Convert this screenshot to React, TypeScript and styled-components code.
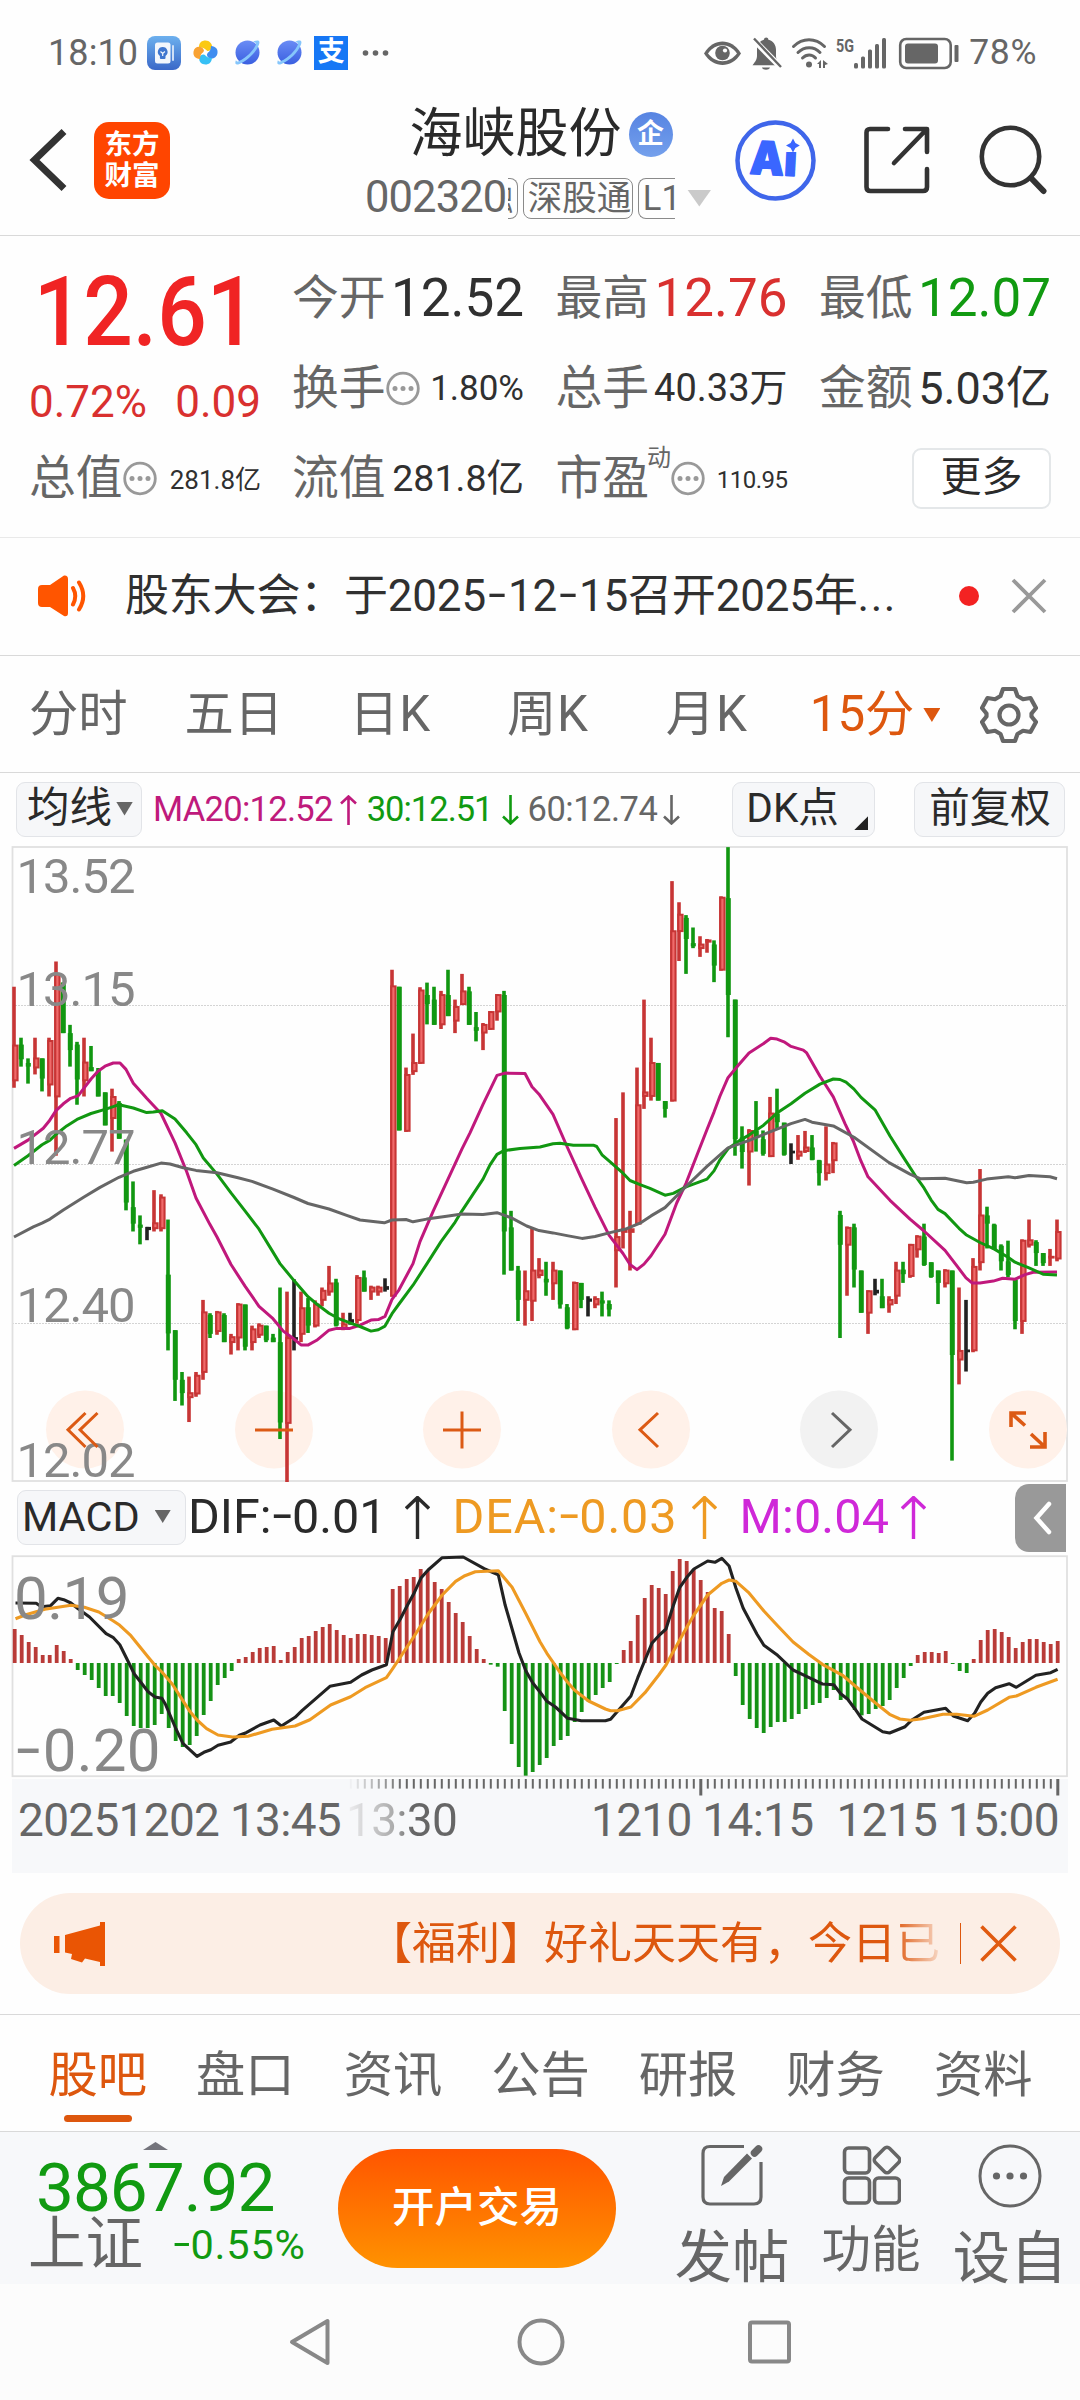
import React from "react";
import styled, { createGlobalStyle, css } from "styled-components";

const C = {
  ink: "#2a2a2a",
  grey: "#666666",
  soft: "#999999",
  line: "#d9d9d9",
  panel: "#f7f8fa",
  orange: "#dd570e",
  red: "#d9302f",
  green: "#119a11",
  ma20: "#bf1a7c",
  dea: "#ee9a22",
  macd: "#cf28d8",
};

const FONT = 'Roboto, "Noto Sans CJK SC", sans-serif';

const GlobalStyle = createGlobalStyle`
  * { box-sizing: border-box; }
  body { margin: 0; background: #fff; }
  svg { display: block; flex: none; }
`;

const Screen = styled.main`
  width: 1080px;
  height: 2400px;
  overflow: hidden;
  background: #fefefe;
  font-family: ${FONT};
  line-height: 1;
  color: ${C.ink};
  white-space: nowrap;
`;

type TextProps = { $size: number; $color?: string; $ls?: number; $ml?: number };
const Text = styled.span<TextProps>`
  flex: none;
  font-size: ${(p) => p.$size}px;
  color: ${(p) => p.$color ?? "inherit"};
  letter-spacing: ${(p) => p.$ls ?? 0}px;
  margin-left: ${(p) => p.$ml ?? 0}px;
`;

// Wide minus sign, lifted to the middle of the digits
const Dash = styled.span.attrs({ children: "-" })<{ $em?: number }>`
  display: inline-block;
  width: ${(p) => p.$em ?? 0.42}em;
  letter-spacing: 0;
  text-align: center;
  transform: translateY(-0.04em) scaleX(1.45);
`;

/* ---------- status bar ---------- */
const StatusBar = styled.header`
  height: 105px;
  padding: 0 43px 0 48px;
  display: flex;
  justify-content: space-between;
  align-items: center;
  color: ${C.grey};
`;
const StatusGroup = styled.div`
  display: flex;
  align-items: center;
`;
const Gap = styled.i<{ $w: number }>`
  flex: none;
  width: ${(p) => p.$w}px;
`;
const AliBadge = styled.span`
  width: 34px;
  height: 34px;
  display: grid;
  place-items: center;
  background: #1677f5;
  color: #fff;
  font-size: 27px;
  font-weight: 700;
`;

const BulbApp = () => (
  <svg width="34" height="34" viewBox="0 0 34 34">
    <defs>
      <linearGradient id="bulb" x1="0" y1="0" x2="0" y2="1">
        <stop offset="0" stopColor="#6cb0ee" />
        <stop offset="1" stopColor="#3a68c8" />
      </linearGradient>
    </defs>
    <rect width="34" height="34" rx="8" fill="url(#bulb)" />
    <rect x="8" y="6.500" width="15.500" height="21" rx="2.500" fill="#f2f6fc" />
    <rect x="25" y="9" width="2" height="16" rx="1" fill="#cfe0f6" />
    <path d="M15.700 11a4.900 4.900 0 0 1 2.800 8.900V22a1 1 0 0 1-1 1h-3.600a1 1 0 0 1-1-1v-2.100A4.900 4.900 0 0 1 15.700 11z" fill="#3f76cf" />
    <path d="M13.500 15.500l2.200 2 2.200-2M15.700 17.500V20" stroke="#f2f6fc" strokeWidth="1.200" fill="none" />
  </svg>
);

const Pinwheel = () => (
  <svg width="25" height="25" viewBox="0 0 25 25">
    <path d="M6 7C6 2.500 9 .500 12.500.500c4 0 7 3.500 6.500 6.500-.5 3-3 4.500-5 4C12 8 9 7.500 6 7z" fill="#fbc912" />
    <path d="M18 6c5 .500 7 3 6.500 7-.5 4-4 6-7 5.500-3-.8-4-3-3.500-5.500C17 12 18 9 18 6z" fill="#3f8df0" />
    <path d="M19 18c-.5 4.500-3 6.500-6.500 6.500-4 0-6.500-3-6.300-6C6.500 15.500 9 14 11.500 14.500 13 17 16 18 19 18z" fill="#36c0f5" />
    <path d="M7 19c-5-.5-7-3.500-6.500-7.300C1 8 4 6.300 7 6.800c3 .700 4.300 3 4 5.200C8 13 7 16 7 19z" fill="#f8a233" />
    <circle cx="12.500" cy="12.500" r="2.200" fill="#fff" />
  </svg>
);

const Planet = () => (
  <svg width="25" height="25" viewBox="0 0 25 25">
    <defs>
      <linearGradient id="planet" x1="0" y1="0" x2="0" y2="1">
        <stop offset="0" stopColor="#6a8cf5" />
        <stop offset="1" stopColor="#3a5fe0" />
      </linearGradient>
    </defs>
    <circle cx="12.500" cy="12.500" r="12" fill="url(#planet)" />
    <path d="M18 1.500c5-2 7.500-1.500 6 3C21.500 12 12 21 4.500 24 .500 25.500-.5 24 1 20c.5 1.500 1.500 2 3 1C11 18 18.500 10.500 21 4.500c0-2-1-2.500-3-3z" fill="#86c6fb" />
  </svg>
);

const StatusIcons = () => (
  <svg width="256" height="36" viewBox="704 34 256 36" fill={C.grey}>
    <path d="M705 52.500C710 44 717 40.500 723.500 40.500S737 44 742 52.500C737 60.500 730 64 723.500 64S710 60.500 705 52.500z" />
    <path d="M709 52.500c4-5.500 9-8.200 14.500-8.200S734 47 738 52.500c-4 5-9 7.700-14.500 7.700S713 57.500 709 52.500z" fill="#fff" />
    <circle cx="723.500" cy="52" r="7.300" />
    <circle cx="726" cy="49.500" r="2.100" fill="#fff" />
    <path d="M758 48c0-5 3.500-8.500 7-9.300 0-2.800 4.400-2.800 4.400 0 4.600 1 7.600 5 7.600 10v6c0 3.500 1 4.500 4 9.500h-27.500c3.500-4.500 4.500-6 4.500-10z" />
    <path d="M763 66.500h8c-1 3-7 3-8 0z" />
    <path d="M753 37l29 29.500" stroke="#fff" strokeWidth="6" />
    <path d="M755 37.500l27 28.500" stroke={C.grey} strokeWidth="2.400" />
    <g fill="none" stroke={C.grey} strokeWidth="3" strokeLinecap="round">
      <path d="M794.500 45.500c9-9 22-9 31 0" />
      <path d="M799 51.500c6.500-6.500 16-6.500 22 0" />
      <path d="M803.500 57c4-4 9.500-4 13 0" />
    </g>
    <circle cx="810" cy="63.500" r="3" />
    <path d="M818 63l4-4v8h-2v-4zM824 59v8h2v-3l3-1z" />
    <text x="837" y="51" fontSize="18" fontWeight="700" textLength="18" lengthAdjust="spacingAndGlyphs">5G</text>
    <rect x="855" y="62" width="4" height="5.500" rx="1.500" />
    <rect x="862" y="55.500" width="4" height="12" rx="1.500" />
    <rect x="869" y="48.500" width="4" height="19" rx="1.500" />
    <rect x="876" y="43" width="4" height="24.500" rx="1.500" />
    <rect x="883" y="37" width="4" height="30.500" rx="1.500" />
    <rect x="901.200" y="38" width="50.500" height="29" rx="6" fill="none" stroke={C.grey} strokeWidth="2.600" />
    <rect x="906" y="42.500" width="33" height="20" rx="3" />
    <rect x="955.500" y="44" width="4" height="17" rx="1" />
  </svg>
);

/* ---------- title bar ---------- */
const TitleBar = styled.nav`
  height: 131px;
  display: flex;
  align-items: flex-start;
  border-bottom: 1px solid ${C.line};
`;
const Slot = styled.div<{ $ml?: number }>`
  flex: none;
  height: 110px;
  margin-left: ${(p) => p.$ml ?? 0}px;
  display: flex;
  align-items: center;
`;
const Logo = styled.div`
  width: 76px;
  height: 77px;
  border-radius: 15px;
  background: #ff4500;
  color: #fff;
  display: flex;
  flex-direction: column;
  align-items: center;
  justify-content: center;
  gap: 4px;
  font-size: 27.500px;
  font-weight: 700;
`;
const StockTitle = styled.div`
  width: 352px;
  margin-left: 195px;
`;
const NameRow = styled.div`
  height: 58px;
  display: flex;
  align-items: center;
  justify-content: center;
`;
const CompanyBadge = styled.span`
  width: 44px;
  height: 45px;
  margin-left: 7px;
  border-radius: 50%;
  background: linear-gradient(#5784e2, #74a0ec);
  color: #fff;
  display: grid;
  place-items: center;
  font-size: 27px;
  font-weight: 700;
`;
const CodeRow = styled.div`
  height: 44px;
  margin-top: 13px;
  display: flex;
  align-items: center;
  color: ${C.grey};
`;
const Tags = styled.div`
  flex: none;
  width: 167px;
  height: 42px;
  margin-left: 2px;
  overflow: hidden;
  display: flex;
  align-items: center;
  justify-content: flex-end;
  gap: 5px;
`;
const Tag = styled.span<{ $open?: "left" | "right"; $width: number }>`
  flex: none;
  width: ${(p) => p.$width}px;
  height: 41px;
  padding-left: 3.500px;
  display: flex;
  align-items: center;
  overflow: hidden;
  border: 1.5px solid #8a8a8a;
  border-radius: 8px;
  font-size: 34.500px;
  ${(p) =>
    p.$open === "left" &&
    css`
      padding: 0 4px 0 0;
      justify-content: flex-end;
      border-left: 0;
      border-radius: 0 8px 8px 0;
    `}
  ${(p) => p.$open === "right" && css`border-right: 0; border-radius: 8px 0 0 8px;`}
`;
const Caret = styled.i<{ $w: number; $h: number; $color: string; $ml?: number; $up?: boolean }>`
  flex: none;
  width: ${(p) => p.$w}px;
  height: ${(p) => p.$h}px;
  margin-left: ${(p) => p.$ml ?? 0}px;
  background: ${(p) => p.$color};
  clip-path: ${(p) => (p.$up ? "polygon(50% 0, 100% 100%, 0 100%)" : "polygon(0 0, 100% 0, 50% 100%)")};
`;

/* ---------- quote ---------- */
const Quote = styled.section`
  height: 302px;
  padding: 17px 27px 0 29px;
  display: flex;
  gap: 31px;
  border-bottom: 1px solid #e9e9e9;
`;
const PriceColumn = styled.div`
  width: 232px;
`;
const Price = styled.div`
  height: 118px;
  display: flex;
  align-items: center;
  justify-content: center;
  color: #f02424;
  font-size: 97px;
  font-weight: 500;
  transform: scaleX(0.9);
`;
const ChangeRow = styled.div`
  height: 62.600px;
  display: flex;
  align-items: center;
  justify-content: space-between;
  color: ${C.red};
  font-size: 44px;
`;
const QuoteGrid = styled.div`
  flex: 1;
  display: grid;
  grid-template-columns: repeat(3, 232px);
  grid-auto-rows: 90.300px;
  column-gap: 31.500px;
`;
const Cell = styled.div`
  height: 90.300px;
  display: flex;
  align-items: center;
`;
const Label = styled.span`
  font-size: 46.800px;
  color: ${C.grey};
`;
const Value = styled.span<{ $size: number; $color?: string; $ls?: number; $drop?: number }>`
  margin-left: auto;
  padding-top: ${(p) => p.$drop ?? 0}px;
  font-size: ${(p) => p.$size}px;
  letter-spacing: ${(p) => p.$ls ?? 0}px;
  color: ${(p) => p.$color ?? "#303030"};
`;
const Sup = styled.sup`
  align-self: flex-start;
  margin: 12px 0 0 -2px;
  font-size: 24px;
  line-height: 1;
  color: ${C.grey};
`;
const MoreButton = styled.button`
  width: 139px;
  height: 61px;
  margin-left: auto;
  padding: 0 0 3px;
  border: 2px solid #e4e7e9;
  border-radius: 9px;
  background: #fff;
  font: 400 41px/1 ${FONT};
  color: ${C.ink};
`;
const InfoDot = () => (
  <svg width="34" height="35" viewBox="0 0 34 35">
    <circle cx="17" cy="17.500" r="15.300" fill="none" stroke="#999" strokeWidth="2.800" />
    {[9, 17, 25].map((x) => (
      <circle key={x} cx={x} cy="17.500" r="2.500" fill="#999" />
    ))}
  </svg>
);

/* ---------- notice ---------- */
const Notice = styled.section`
  height: 118px;
  padding: 0 0 2px 38px;
  display: flex;
  align-items: center;
  border-bottom: 1px solid ${C.line};
`;
const NoticeText = styled.p`
  width: 777px;
  margin: 0 57px 0 37px;
  font-size: 44px;
  letter-spacing: -0.2px;
  color: #303030;
`;
const Ellipsis = styled.span`
  letter-spacing: 1.500px;
`;
const RedDot = styled.i`
  width: 20px;
  height: 20px;
  border-radius: 50%;
  background: #f32222;
`;

/* ---------- period tabs ---------- */
const Periods = styled.nav`
  height: 117px;
  padding: 2px 0 0 29px;
  display: flex;
  align-items: center;
  color: ${C.grey};
  border-bottom: 1px solid ${C.line};
`;

/* ---------- chart ---------- */
const ChartBar = styled.div`
  height: 73px;
  padding-left: 16px;
  display: flex;
  align-items: center;
`;
const Chip = styled.button<{ $width: number; $ml?: number; $pl: number; $size: number }>`
  position: relative;
  flex: none;
  width: ${(p) => p.$width}px;
  height: 55px;
  margin-left: ${(p) => p.$ml ?? 0}px;
  padding: 0 0 2px ${(p) => p.$pl}px;
  display: flex;
  align-items: center;
  border: 1.5px solid #e2e4e8;
  border-radius: 9px;
  background: #f6f7f9;
  color: ${C.ink};
  font: 400 ${(p) => p.$size}px/1 ${FONT};
`;
const Corner = styled.i`
  position: absolute;
  right: 6px;
  bottom: 6px;
  width: 14px;
  height: 14px;
  background: #222;
  clip-path: polygon(100% 0, 100% 100%, 0 100%);
`;
const Plot = styled.svg`
  margin-left: 11px;
  font-family: ${FONT};
`;
const PlotFrame = styled.div`
  position: relative;
`;
const PlotLabel = styled.span<{ $top: number; $ls: number }>`
  position: absolute;
  left: 14px;
  top: ${(p) => p.$top}px;
  font-size: 60px;
  letter-spacing: ${(p) => p.$ls}px;
  color: #888;
`;
const MacdBar = styled.div`
  height: 71px;
  padding-left: 17px;
  display: flex;
  align-items: center;
`;
const Collapse = styled.button`
  flex: none;
  width: 51px;
  height: 68px;
  margin-left: 89px;
  padding: 0 0 0 18px;
  border: 0;
  border-radius: 14px 0 0 14px;
  background: #999;
`;
const Axis = styled.div`
  width: 1056px;
  height: 94px;
  margin: 1px 0 0 12px;
  background: ${C.panel};
`;
const AxisLabels = styled.div`
  height: 48px;
  padding-left: 6px;
  display: flex;
  align-items: center;
  color: ${C.grey};
`;
const FadeIn = styled(Text)`
  background: linear-gradient(90deg, #f0f0f2, #a8a8a8 45%, ${C.grey} 60%);
  background-clip: text;
  -webkit-background-clip: text;
  color: transparent;
`;

const Arrow = ({ color, down, w, h, ml, sw }: { color: string; down?: boolean; w: number; h: number; ml: number; sw: number }) => (
  <svg width={w} height={h} viewBox={`0 0 ${w} ${h}`} style={{ marginLeft: ml }} fill="none" stroke={color} strokeWidth={sw}>
    {down ? (
      <path d={`M${w / 2} 0V${h - 1}M1 ${h - w / 2}L${w / 2} ${h - 1.5}L${w - 1} ${h - w / 2}`} />
    ) : (
      <path d={`M${w / 2} ${h}V1M1 ${w / 2}L${w / 2} 1.500L${w - 1} ${w / 2}`} />
    )}
  </svg>
);

// kind, high, body top, body bottom, low – in axis units, 168 is the top of the panel
type Candle = [string, number, number, number, number];
const CANDLES = `R472,598,678,692 G583,598,630,646 G628,638,646,683 R583,626,650,663 G628,628,672,700
R583,588,687,711 R417,443,713,840 G463,463,573,573 G555,573,610,646 G592,598,674,729
R583,635,678,711 G601,647,656,656 G649,655,711,711 G702,702,774,774 R694,710,760,831
G721,725,803,803 G805,805,942,959 G896,952,988,1005 G970,990,997,1033 K995,995,1002,1024
R915,985,1000,1005 R924,929,1000,1005 G979,1099,1227,1264 G1220,1220,1328,1374 G1311,1328,1357,1384
R1321,1355,1368,1420 R1311,1317,1360,1365 R1154,1179,1313,1328 G1183,1187,1228,1237 R1178,1179,1224,1230
G1183,1187,1246,1246 R1228,1233,1248,1273 R1161,1162,1238,1264 G1164,1164,1256,1264 R1210,1216,1248,1264
R1205,1208,1232,1237 G1210,1210,1242,1246 G1228,1236,1246,1246 G1127,1246,1421,1457 R1136,1235,1424,1551
K1109,1235,1241,1264 R1136,1170,1230,1246 G1150,1170,1210,1226 R1155,1162,1212,1214 R1127,1132,1156,1168
R1080,1116,1138,1145 G1108,1116,1210,1212 R1182,1205,1218,1220 K1182,1196,1204,1208 R1100,1104,1200,1206
G1090,1105,1136,1136 R1123,1125,1138,1154 R1123,1125,1138,1145 K1107,1124,1132,1136 R435,469,1147,1147
G472,472,785,785 R648,662,788,788 R574,636,658,664 R473,478,640,640 G463,490,510,554
G472,500,555,555 R481,488,556,564 G435,490,536,536 R500,514,548,573 R444,480,512,512
G472,482,555,555 G527,560,568,591 R551,553,574,610 R525,525,566,566 R488,488,528,546
G481,490,1005,1099 G960,996,1090,1090 G1080,1090,1154,1200 R1090,1133,1156,1210 R996,1088,1158,1200
R1063,1088,1102,1107 G1071,1108,1116,1145 R1071,1088,1120,1154 G1090,1090,1164,1173 G1163,1170,1216,1218
R1114,1115,1220,1220 G1117,1117,1154,1172 K1146,1151,1158,1190 R1146,1150,1166,1172 G1136,1155,1162,1190
G1155,1163,1175,1190 R758,1015,1048,1127 R702,998,1008,1042 R960,998,1008,1090 R648,728,990,990
R500,700,712,738 R583,636,712,720 G638,638,720,720 G721,721,738,757 R242,349,722,722
R288,313,353,416 G316,322,368,444 G343,377,384,388 R362,378,390,407 R368,369,376,398
G371,380,426,462 R275,276,437,437 G168,279,490,582 G500,500,804,840 G776,800,832,868
R782,784,833,905 G721,785,800,831 G785,804,836,840 R712,746,843,843 G694,748,767,784
G768,768,838,840 K813,829,835,858 R795,829,842,849 R786,820,832,834 G795,822,849,850
G849,850,878,905 R776,857,880,894 R810,811,852,878 G960,969,1034,1237 R994,995,1036,1145
G988,996,1088,1127 G1090,1090,1182,1182 R1133,1133,1184,1228 K1108,1132,1140,1144 G1108,1146,1172,1172
R1146,1152,1166,1182 R1071,1088,1147,1163 G1071,1088,1098,1117 R1032,1032,1104,1106 R1013,1014,1046,1062
G988,1016,1078,1080 G1072,1072,1104,1106 G1090,1090,1117,1163 R1087,1088,1120,1127 G1090,1090,1274,1504
R1127,1263,1286,1338 K1154,1262,1268,1310 R1063,1080,1266,1268 R869,968,1074,1090 G951,970,988,1042
G988,990,1044,1044 G1033,1036,1070,1090 G1025,1070,1100,1105 G1108,1110,1200,1218 R1022,1023,1202,1228
R979,1022,1036,1040 G1024,1028,1052,1080 G1052,1052,1074,1080 R1043,1058,1064,1080 R979,1004,1066,1070`
  .split(/\s+/)
  .map((s) => [s[0], ...s.slice(1).split(",").map(Number)] as Candle);

const MA20 =
  "42,824 84,806 130,780 147,765 168,742 190,727 212,715 235,709 252,693 273,673 294,656 315,645 340,638 360,638 378,652 400,682 440,715 483,748 525,812 560,875 588,932 630,990 651,1017 693,1077 735,1124 777,1168 819,1195 850,1222 880,1238 903,1252 925,1252 950,1242 987,1220 1010,1216 1050,1216 1080,1209 1113,1198 1135,1197 1155,1190 1176,1153 1197,1132 1239,1075 1260,1027 1300,960 1344,891 1386,825 1410,790 1449,728 1491,665 1515,660 1575,661 1596,690 1617,706 1659,750 1701,820 1743,887 1785,952 1827,1013 1869,1053 1890,1077 1911,1088 1932,1076 1953,1058 1995,1011 2030,943 2058,900 2090,840 2121,783 2142,745 2160,710 2184,670 2215,643 2247,616 2290,596 2312,584 2331,586 2352,592 2373,602 2410,610 2420,616 2460,667 2500,712 2535,770 2560,808 2583,852 2604,886 2670,937 2730,978 2772,1004 2835,1046 2877,1086 2898,1106 2916,1117 2940,1117 2980,1113 3008,1107 3045,1109 3075,1099 3100,1094 3171,1093";
const MA30 =
  "42,861 84,840 126,816 150,806 170,792 200,775 231,761 273,748 320,738 357,729 400,736 440,746 460,745 487,742 525,760 560,790 588,816 610,845 651,880 693,921 735,960 777,1000 819,1050 840,1075 882,1112 924,1147 950,1163 987,1183 1020,1196 1060,1207 1080,1212 1113,1222 1135,1219 1155,1211 1176,1184 1197,1163 1239,1122 1281,1075 1323,1027 1365,985 1386,960 1449,891 1470,860 1491,837 1512,829 1560,824 1620,821 1659,814 1680,813 1720,817 1780,817 1790,820 1806,838 1827,851 1869,878 1890,894 1920,903 1950,911 1995,926 2020,922 2058,908 2121,891 2142,873 2160,849 2184,825 2220,806 2247,795 2290,774 2331,747 2373,727 2415,704 2460,684 2500,673 2520,674 2538,680 2562,695 2583,713 2625,740 2670,797 2709,842 2751,889 2772,910 2793,936 2814,957 2835,966 2877,998 2898,1012 2940,1029 2982,1043 3024,1061 3045,1072 3087,1084 3129,1098 3171,1100";
const MA60 =
  "42,1017 100,995 126,987 150,978 190,958 252,930 300,909 357,887 400,874 441,865 483,856 510,858 550,866 588,872 651,877 714,888 756,896 819,913 882,931 924,944 987,956 1040,970 1080,980 1153,986 1176,980 1218,979 1239,984 1280,978 1340,972 1386,967 1449,968 1491,964 1533,975 1580,993 1617,1003 1659,1008 1701,1014 1746,1020 1785,1016 1827,1008 1880,999 1920,987 1953,971 1995,953 2058,907 2121,863 2160,838 2184,823 2250,806 2310,788 2373,770 2415,761 2436,767 2500,775 2562,800 2667,855 2730,880 2760,890 2835,889 2900,899 2920,898 2960,891 3025,886 3045,888 3087,883 3150,886 3171,890";

const HIST = `447 465 486 501 525 525 495 513 537 570 585 600 624 648 648 669 708 738 744 744 735 702 744 783 801 795 768 705 663 615
594 573 537 531 516 504 501 498 540 516 501 474 468 453 441 432 450 465 474 462 462 465 468 474 327 318 297 291 267 273
306 327 366 399 426 468 507 537 554 560 693 792 861 887 876 855 834 798 780 768 726 696 666 645 624 606 551 510 483 405
354 315 324 342 273 237 243 267 300 336 384 393 462 588 675 717 744 759 741 726 726 717 702 687 675 669 654 630 660 660
690 706 702 687 678 660 624 594 558 525 516 516 519 513 551 573 579 537 480 450 447 456 471 504 486 477 477 486 492 483`
  .split(/\s+/)
  .map(Number);

const DIF =
  "45,369 105,370 120,380 147,377 168,355 185,359 206,369 225,385 260,411 308,461 328,472 348,494 370,540 390,582 410,608 430,635 450,651 470,655 480,672 511,747 531,790 572,829 592,817 612,809 633,796 670,786 695,766 715,758 755,735 795,720 817,738 857,712 877,692 917,656 958,619 1018,607 1050,585 1080,570 1122,554 1141,455 1162,418 1183,376 1203,338 1223,293 1243,270 1284,233 1345,231 1406,266 1447,284 1467,376 1487,447 1507,519 1527,573 1547,609 1568,636 1588,664 1613,681 1648,715 1688,722 1758,722 1773,718 1832,648 1852,593 1873,540 1893,490 1913,467 1934,447 1954,380 1974,322 1995,291 2015,267 2055,243 2076,247 2096,235 2117,258 2137,325 2158,385 2198,463 2218,496 2258,526 2303,570 2348,592 2388,612 2421,614 2441,641 2461,657 2482,686 2503,717 2563,755 2583,759 2628,740 2648,720 2683,697 2746,685 2768,708 2810,722 2830,700 2848,666 2868,640 2891,623 2930,611 2951,622 3008,586 3051,578 3071,568";
const DEA =
  "45,416 75,404 130,388 206,376 245,382 287,396 328,422 348,436 380,467 430,531 450,556 470,576 500,612 531,662 551,694 572,720 600,746 633,765 675,771 720,769 790,748 857,738 900,719 960,675 1018,650 1060,623 1122,593 1141,565 1203,468 1243,402 1284,345 1323,304 1350,287 1380,275 1447,272 1487,322 1527,401 1568,485 1588,520 1628,580 1648,607 1668,630 1709,663 1758,687 1773,692 1793,692 1832,681 1873,638 1913,585 1934,555 1954,517 1995,440 2015,405 2055,345 2096,310 2117,300 2137,304 2173,337 2218,393 2258,437 2303,486 2348,523 2388,553 2448,587 2503,635 2543,670 2583,703 2613,717 2643,721 2678,716 2738,703 2778,703 2828,709 2868,690 2930,652 2951,648 3008,622 3071,598";

const scalePoints = (pts: string, fx: number, ox: number, fy: number, oy: number) =>
  pts
    .split(" ")
    .map((p) => {
      const [x, y] = p.split(",").map(Number);
      return `${(x * fx + ox).toFixed(1)},${(y * fy + oy).toFixed(1)}`;
    })
    .join(" ");

const UNIT = 720 / 1568;
const priceY = (v: number) => 770 + v * UNIT;
const priceLine = (pts: string) => scalePoints(pts, 1 / 3, 0, UNIT, 770);
const macdLine = (pts: string) => scalePoints(pts, 540 / 1568, 0, 1 / 3, 1480);

const PriceChart = () => (
  <Plot width="1058" height="636" viewBox="11 846 1058 636">
    <g stroke="#d4d4d4" strokeWidth="1" strokeDasharray="2 1">
      {[1005.5, 1164.500, 1323.500].map((y) => (
        <line key={y} x1="12" x2="1067" y1={y} y2={y} />
      ))}
    </g>
    <rect x="12.500" y="847" width="1054.500" height="634" fill="none" stroke="#e0e0e0" strokeWidth="1.800" />
    {[85, 274, 462, 651, 839, 1028].map((x, i) => (
      <circle key={x} cx={x} cy="1429.500" r="39" fill={i === 4 ? "#f2f2f2" : "#fff1e9"} />
    ))}
    {CANDLES.map(([k, hi, top, bottom, lo], i) => {
      const x = 14 + 7 * i;
      const color = k === "R" ? "#c73535" : k === "G" ? "#119711" : "#222";
      const t = priceY(top);
      const h = Math.max(2, (bottom - top) * UNIT);
      return (
        <g key={i} fill={color}>
          <rect x={x - 1.8} y={priceY(hi)} width="3.600" height={(lo - hi) * UNIT} />
          {k === "R" ? (
            <>
              <rect x={x - 1.8} y={t} width="6.400" height={h} />
              {h > 5 && <rect x={x + 0.3} y={t + 2} width="2.200" height={h - 4} fill="#f06a6a" />}
            </>
          ) : (
            <rect x={k === "K" ? x - 1 : x - 2.2} y={t} width="5" height={h} />
          )}
        </g>
      );
    })}
    <g fill="none" strokeWidth="3" strokeLinejoin="round">
      <polyline points={priceLine(MA20)} stroke="#c0187c" />
      <polyline points={priceLine(MA30)} stroke="#119711" />
      <polyline points={priceLine(MA60)} stroke="#666" />
    </g>
    <g fontSize="49" fill="#888">
      {([["13.52", 892.5], ["13.15", 1005.500], ["12.77", 1163.500], ["12.40", 1322], ["12.02", 1477]] as const).map(([t, y]) => (
        <text key={t} x="16.500" y={y} textLength="119">{t}</text>
      ))}
    </g>
    <g fill="none" stroke="#dc5a14" strokeWidth="3">
      <path d="M85.500 1413L68 1429.800L85.500 1447M97.500 1413L80 1429.800L97.500 1447" />
      <path d="M255 1430H293" />
      <path d="M443 1430H481M462 1411.500V1448.500" />
      <path d="M658 1413L640 1429.800L658 1447" />
      <path d="M832 1413L850 1429.800L832 1447" stroke="#666" />
      <g strokeWidth="3.600">
        <path d="M1026 1413H1011V1427M1011 1413L1025 1425.500" />
        <path d="M1030 1447H1045V1432M1045 1447L1031 1434" />
      </g>
    </g>
  </Plot>
);

const MacdChart = () => (
  <PlotFrame>
    <Plot width="1058" height="225" viewBox="11 1553 1058 225">
      <rect x="12.500" y="1556.200" width="1054.500" height="220" fill="none" stroke="#e0e0e0" strokeWidth="1.800" />
      {HIST.map((v, i) => {
        const y = 1480 + v / 3;
        const up = y < 1663;
        return (
          <rect
            key={i}
            x={12.8 + 7 * i}
            width="3.800"
            y={up ? y : 1663}
            height={Math.max(1, Math.abs(y - 1663))}
            fill={up ? "#b93b38" : "#159215"}
          />
        );
      })}
      <g fill="none" strokeWidth="3.100" strokeLinejoin="round">
        <polyline points={macdLine(DIF)} stroke="#222" />
        <polyline points={macdLine(DEA)} stroke={C.dea} />
      </g>
    </Plot>
    <PlotLabel $top={16} $ls={-0.5}>0.19</PlotLabel>
    <PlotLabel $top={168} $ls={0.2}><Dash $em={0.48} />0.20</PlotLabel>
  </PlotFrame>
);

const Ticks = () => (
  <svg width="1056" height="17" viewBox="12 1779 1056 17" fill={C.grey}>
    {Array.from({ length: 102 }, (_, n) => {
      const i = n + 48;
      const major = i === 98 || i === 149;
      return (
        <rect
          key={i}
          x={14.8 + 7 * i - (major ? 1.5 : 1)}
          y="1779"
          width={major ? 3 : 2}
          height={major ? 16.5 : 9.6}
          opacity={Math.min(1, (n + 0.4) / 8)}
        />
      );
    })}
  </svg>
);

/* ---------- banner ---------- */
const Banner = styled.aside`
  width: 1040px;
  height: 101px;
  margin: 20px 0 0 20px;
  padding-left: 34px;
  display: flex;
  align-items: center;
  border-radius: 51px;
  background: #fceee5;
  color: ${C.orange};
`;
const BannerText = styled.p`
  width: 573px;
  margin: 0 0 0 262px;
  overflow: hidden;
  font-size: 44px;
  line-height: 60px;
  mask-image: linear-gradient(90deg, #000 525px, transparent 580px);
`;
const BannerRule = styled.i`
  width: 1px;
  height: 41px;
  margin: 0 19px;
  background: ${C.orange};
`;

/* ---------- content tabs ---------- */
const ContentTabs = styled.nav`
  height: 118px;
  margin-top: 20px;
  padding: 0 23px 0 24px;
  display: grid;
  grid-template-columns: repeat(7, 1fr);
  border-top: 1px solid ${C.line};
  border-bottom: 1px solid ${C.line};
`;
const ContentTab = styled.button<{ $active?: boolean }>`
  padding: 36px 0 0;
  border: 0;
  background: none;
  display: flex;
  flex-direction: column;
  align-items: center;
  font: 400 49.300px/1 ${FONT};
  color: ${(p) => (p.$active ? C.orange : C.grey)};
  ${(p) =>
    p.$active &&
    css`
      &::after {
        content: "";
        width: 68px;
        height: 7px;
        margin-top: 15px;
        border-radius: 4px;
        background: ${C.orange};
      }
    `}
`;

/* ---------- bottom bar ---------- */
const BottomBar = styled.footer`
  height: 152px;
  display: flex;
  align-items: flex-start;
  overflow: hidden;
  background: ${C.panel};
`;
const IndexBox = styled.div`
  flex: none;
  width: 308px;
  height: 152px;
  padding: 10px 0 0 36px;
  display: flex;
  flex-direction: column;
`;
const IndexPrice = styled.strong`
  margin-top: 4px;
  font-size: 67.500px;
  font-weight: 400;
  letter-spacing: -1px;
  color: ${C.green};
`;
const IndexRow = styled.div`
  display: flex;
  align-items: center;
  height: 56px;
  margin: -5px 0 0 -8px;
`;
const TradeButton = styled.button`
  width: 278px;
  height: 119px;
  margin: 17px 0 0 30px;
  padding: 0 0 1px;
  border: 0;
  border-radius: 60px;
  background: linear-gradient(#ff5500, #ff9200);
  color: #fff;
  font: 500 42.500px/1 ${FONT};
`;
const Action = styled.button<{ $width: number; $ml: number; $size: number; $gap: number }>`
  flex: none;
  width: ${(p) => p.$width}px;
  margin-left: ${(p) => p.$ml}px;
  padding: 12px 0 0;
  border: 0;
  background: none;
  display: flex;
  flex-direction: column;
  align-items: center;
  gap: ${(p) => p.$gap}px;
  font: 400 ${(p) => p.$size}px/1 ${FONT};
  color: ${C.grey};
`;
const SystemNav = styled.div`
  height: 116px;
  display: flex;
  align-items: center;
  justify-content: center;
  background: #fcfcfc;
`;

export default function App() {
  return (
    <Screen>
      <GlobalStyle />
      <StatusBar>
        <StatusGroup>
          <Text $size={36} $ls={0.1}>18:10</Text>
          <Gap $w={9} />
          <BulbApp />
          <Gap $w={12} />
          <Pinwheel />
          <Gap $w={17} />
          <Planet />
          <Gap $w={17} />
          <Planet />
          <Gap $w={12} />
          <AliBadge>支</AliBadge>
          <svg width="28" height="8" viewBox="0 0 28 8" fill={C.grey} style={{ marginLeft: 14 }}>
            <circle cx="3.500" cy="4" r="2.800" />
            <circle cx="13.500" cy="4" r="2.800" />
            <circle cx="23.500" cy="4" r="2.800" />
          </svg>
        </StatusGroup>
        <StatusGroup>
          <StatusIcons />
          <Text $size={35.5} $ml={10} $ls={0.6}>78%</Text>
        </StatusGroup>
      </StatusBar>

      <TitleBar>
        <Slot $ml={28}>
          <svg width="42" height="70" viewBox="0 0 42 70" fill="none" stroke="#333" strokeWidth="7">
            <path d="M36 6.500L6.500 35L36 63.500" strokeLinejoin="miter" />
          </svg>
        </Slot>
        <Slot $ml={24}>
          <Logo>
            <span>东方</span>
            <span>财富</span>
          </Logo>
        </Slot>
        <StockTitle>
          <NameRow>
            <Text $size={53}>海峡股份</Text>
            <CompanyBadge>企</CompanyBadge>
          </NameRow>
          <CodeRow>
            <Text $size={43.5} $ls={-0.9}>002320</Text>
            <Tags>
              <Tag $open="left" $width={10}>融</Tag>
              <Tag $width={110}>深股通</Tag>
              <Tag $open="right" $width={37}>L1</Tag>
            </Tags>
            <Caret $w={24} $h={17} $color="#cacaca" $ml={12} />
          </CodeRow>
        </StockTitle>
        <Slot $ml={18}>
          <svg width="81" height="83" viewBox="0 0 81 83">
            <circle cx="40.500" cy="41.500" r="38" fill="none" stroke="#3f66ea" strokeWidth="4.500" />
            <text x="15" y="56" fontFamily="Inter" fontWeight="900" fontSize="46" fill="#3a66ff" stroke="#3a66ff" strokeWidth="1.500" strokeLinejoin="round" textLength="47" lengthAdjust="spacingAndGlyphs" transform="rotate(3 40 41)">Ai</text>
            <rect x="50" y="16" width="16" height="17" fill="#fefefe" />
            <path d="M58 19.500l2.400 4.600 4.400 2.400-4.400 2.400L58 33.500l-2.400-4.600-4.600-2.400 4.600-2.400z" fill="#3a66ff" />
          </svg>
        </Slot>
        <Slot $ml={48}>
          <svg width="66" height="68" viewBox="0 0 66 68" fill="none" stroke="#333" strokeWidth="4.600" strokeLinecap="round" strokeLinejoin="round">
            <path d="M24 3H6Q2.500 3 2.500 6.500V61Q2.500 65 6.500 65H59Q63 65 63 61V43" />
            <path d="M41 3H63V26M61 5L30 37" />
          </svg>
        </Slot>
        <Slot $ml={49}>
          <svg width="68" height="70" viewBox="0 0 68 70" fill="none" stroke="#333" strokeWidth="4.600" strokeLinecap="round">
            <circle cx="31.500" cy="31.500" r="28.700" />
            <path d="M52 53L64.500 66" strokeWidth="6" />
          </svg>
        </Slot>
      </TitleBar>

      <Quote>
        <PriceColumn>
          <Price>12.61</Price>
          <ChangeRow>
            <span>0.72%</span>
            <span>0.09</span>
          </ChangeRow>
          <Cell>
            <Label>总值</Label>
            <InfoDot />
            <Value $size={26} $drop={2}>281.8亿</Value>
          </Cell>
        </PriceColumn>
        <QuoteGrid>
          <Cell><Label>今开</Label><Value $size={53}>12.52</Value></Cell>
          <Cell><Label>最高</Label><Value $size={53} $color={C.red}>12.76</Value></Cell>
          <Cell><Label>最低</Label><Value $size={53} $color={C.green}>12.07</Value></Cell>
          <Cell><Label>换手</Label><InfoDot /><Value $size={35}>1.80%</Value></Cell>
          <Cell><Label>总手</Label><Value $size={38}>40.33万</Value></Cell>
          <Cell><Label>金额</Label><Value $size={45}>5.03亿</Value></Cell>
          <Cell><Label>流值</Label><Value $size={37.5}>281.8亿</Value></Cell>
          <Cell><Label>市盈</Label><Sup>动</Sup><InfoDot /><Value $size={24} $ls={-0.5} $drop={3}>110.95</Value></Cell>
          <Cell><MoreButton>更多</MoreButton></Cell>
        </QuoteGrid>
      </Quote>

      <Notice>
        <svg width="50" height="42" viewBox="0 0 50 42" fill="#ff5500">
          <path d="M4 10H12L26 .500Q30 0 30 4V38Q30 42 26 41L12 32H4Q0 32 0 28V14Q0 10 4 10z" />
          <path d="M35 13Q39.500 21 35 29.500M41 7.500Q49.500 21 41 34.500" fill="none" stroke="#ff5500" strokeWidth="4" strokeLinecap="round" />
        </svg>
        <NoticeText>
          股东大会：于2025<Dash $em={0.5} />12<Dash $em={0.5} />15召开2025年<Ellipsis>...</Ellipsis>
        </NoticeText>
        <RedDot />
        <svg width="36" height="36" viewBox="0 0 36 36" style={{ marginLeft: 32 }} stroke="#999" strokeWidth="3.800">
          <path d="M2 2L34 34M34 2L2 34" />
        </svg>
      </Notice>

      <Periods>
        <Text $size={49.3}>分时</Text>
        <Text $size={49.3} $ml={57}>五日</Text>
        <Text $size={49.3} $ml={66} $ls={0.8}>日K</Text>
        <Text $size={49.3} $ml={76} $ls={0.8}>周K</Text>
        <Text $size={49.3} $ml={77} $ls={0.8}>月K</Text>
        <Text $size={49.3} $ml={62} $color={C.orange}>15分</Text>
        <Caret $w={17} $h={14} $color={C.orange} $ml={9} />
        <svg width="58" height="58" viewBox="0 0 58 58" style={{ marginLeft: 40 }} fill="none" stroke={C.grey} strokeWidth="4.200" strokeLinejoin="round">
          <path d="M23 3H35L37.500 10L43 13.200L50.500 12L56 22L51.500 27.500V30.500L56 36L50.500 46L43 44.800L37.500 48L35 55H23L20.500 48L15 44.800L7.500 46L2 36L6.500 30.500V27.500L2 22L7.500 12L15 13.200L20.500 10z" />
          <circle cx="29" cy="29" r="9.500" />
        </svg>
      </Periods>

      <ChartBar>
        <Chip $width={126} $pl={10} $size={42.5}>均线<Caret $w={17} $h={14} $color={C.grey} $ml={4} /></Chip>
        <Text $size={34.5} $ml={11} $ls={-0.7} $color={C.ma20}>MA20:12.52</Text>
        <Arrow color={C.ma20} w={17} h={30} ml={7} sw={2.6} />
        <Text $size={34.5} $ml={10} $ls={-1} $color={C.green}>30:12.51</Text>
        <Arrow color={C.green} down w={17} h={30} ml={9} sw={2.6} />
        <Text $size={34.5} $ml={9} $ls={-0.5} $color={C.grey}>60:12.74</Text>
        <Arrow color={C.grey} down w={17} h={30} ml={6} sw={2.6} />
        <Chip $width={143} $ml={52} $pl={13} $size={40.5}>DK点<Corner /></Chip>
        <Chip $width={151} $ml={39} $pl={14} $size={40.5}>前复权</Chip>
      </ChartBar>
      <PriceChart />

      <MacdBar>
        <Chip $width={169} $pl={4} $size={41.5}>MACD<Caret $w={16} $h={13} $color={C.grey} $ml={15} /></Chip>
        <Text $size={48.5} $ml={2}>DIF:<Dash />0.01</Text>
        <Arrow color={C.ink} w={25} h={43} ml={18} sw={3.4} />
        <Text $size={48.5} $ml={23} $ls={0.9} $color={C.dea}>DEA:<Dash />0.03</Text>
        <Arrow color={C.dea} w={25} h={43} ml={15} sw={3.4} />
        <Text $size={48.5} $ml={22} $ls={0.2} $color={C.macd}>M:0.04</Text>
        <Arrow color={C.macd} w={25} h={43} ml={12} sw={3.4} />
        <Collapse>
          <svg width="20" height="34" viewBox="0 0 20 34" fill="none" stroke="#fff" strokeWidth="4.500" strokeLinecap="round">
            <path d="M16 3L3.500 17L16 31" />
          </svg>
        </Collapse>
      </MacdBar>
      <MacdChart />

      <Axis>
        <Ticks />
        <AxisLabels>
          <Text $size={46} $ls={-0.7}>20251202 13:45</Text>
          <FadeIn $size={46} $ml={5} $ls={-0.7}>13:30</FadeIn>
          <Text $size={46} $ml={134} $ls={-0.7}>1210 14:15</Text>
          <Text $size={46} $ml={23} $ls={-0.7}>1215 15:00</Text>
        </AxisLabels>
      </Axis>

      <Banner>
        <svg width="52" height="44" viewBox="0 0 52 44" fill="#ea5504">
          <rect x="0" y="14" width="5.500" height="17" />
          <path d="M11 13L46 3.500V0H51V44H46V40L31 36.500L28 40.500L17 37L18 32L11 30.500z" />
        </svg>
        <BannerText>【福利】好礼天天有，今日已</BannerText>
        <BannerRule />
        <svg width="37" height="37" viewBox="0 0 37 37" stroke="#e05a10" strokeWidth="3.600">
          <path d="M1.500 1.500L35.500 35.500M35.500 1.500L1.500 35.500" />
        </svg>
      </Banner>

      <ContentTabs>
        {["股吧", "盘口", "资讯", "公告", "研报", "财务", "资料"].map((t, i) => (
          <ContentTab key={t} $active={i === 0}>{t}</ContentTab>
        ))}
      </ContentTabs>

      <BottomBar>
        <IndexBox>
          <Caret $w={25} $h={8} $color="#74747c" $ml={107} $up />
          <IndexPrice>3867.92</IndexPrice>
          <IndexRow>
            <Text $size={57.5} $color={C.grey}>上证</Text>
            <Text $size={41.5} $ml={30} $ls={0.8} $color={C.green}><Dash />0.55%</Text>
          </IndexRow>
        </IndexBox>
        <TradeButton>开户交易</TradeButton>
        <Action $width={118} $ml={57} $size={57.3} $gap={23}>
          <svg width="62" height="62" viewBox="0 0 62 62" fill="none" stroke={C.grey} strokeWidth="3.200">
            <path d="M43 2.500H9Q2 2.500 2 9.500V53Q2 60 9 60H53Q60 60 60 53V18" />
            <path d="M20 42L23 33L46 9.500L51 14.500L28 37.500z" fill={C.grey} stroke="none" />
            <path d="M54 7.500L58 3.500" strokeWidth="7.500" strokeLinecap="round" transform="translate(-.500 1.500)" />
          </svg>
          发帖
        </Action>
        <Action $width={110} $ml={25} $size={49.5} $gap={21}>
          <svg width="60" height="61" viewBox="-1.500 0 60 61" fill="none" stroke={C.grey} strokeWidth="3.600">
            <rect x="2" y="4" width="25" height="25" rx="4" />
            <rect x="2" y="34" width="25" height="25" rx="4" />
            <rect x="32" y="34" width="25" height="25" rx="4" />
            <rect x="34.500" y="6" width="20" height="20" rx="3.500" transform="rotate(45 44.500 16)" />
          </svg>
          功能
        </Action>
        <Action $width={118} $ml={25} $size={57.3} $gap={22}>
          <svg width="64" height="64" viewBox="0 0 64 64" fill={C.grey}>
            <circle cx="32" cy="32" r="30" fill="none" stroke={C.grey} strokeWidth="3" />
            <circle cx="18.500" cy="32" r="3.600" />
            <circle cx="32" cy="32" r="3.600" />
            <circle cx="45.500" cy="32" r="3.600" />
          </svg>
          设自
        </Action>
      </BottomBar>

      <SystemNav>
        <svg width="42" height="48" viewBox="0 0 42 48" fill="none" stroke="#888" strokeWidth="4" strokeLinejoin="round">
          <path d="M38.500 3V45L3 24z" />
        </svg>
        <Gap $w={186} />
        <svg width="48" height="48" viewBox="0 0 48 48" fill="none" stroke="#888" strokeWidth="4">
          <circle cx="24" cy="24" r="21.500" />
        </svg>
        <Gap $w={183} />
        <svg width="43" height="44" viewBox="0 0 43 44" fill="none" stroke="#888" strokeWidth="4">
          <rect x="2" y="2.500" width="39" height="39" rx="2" />
        </svg>
      </SystemNav>
    </Screen>
  );
}
